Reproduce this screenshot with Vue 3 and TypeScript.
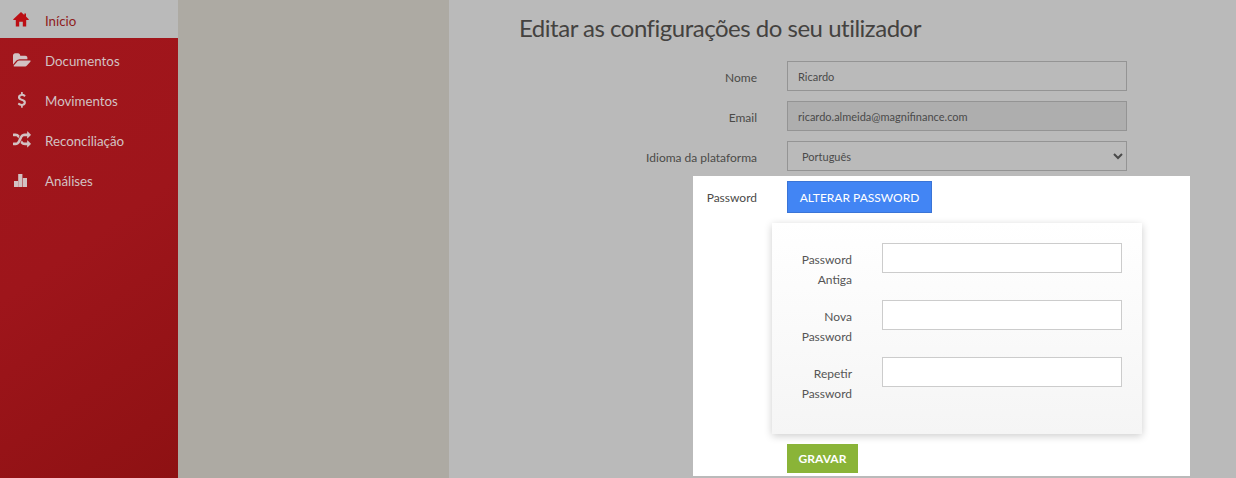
<script setup lang="ts">
const items = [
  { label: 'Início', icon: 'home', active: true },
  { label: 'Documentos', icon: 'folder' },
  { label: 'Movimentos', icon: 'dollar' },
  { label: 'Reconciliação', icon: 'random' },
  { label: 'Análises', icon: 'bars' },
]
const pwFields = [
  ['Password', 'Antiga'],
  ['Nova', 'Password'],
  ['Repetir', 'Password'],
]
</script>

<template>
  <div class="page">
    <nav class="sidebar">
      <a v-for="it in items" :key="it.label" class="nav-item" :class="{ active: it.active }">
        <span class="nav-icon">
          <svg v-if="it.icon === 'home'" class="home" width="16" height="15" viewBox="0 0 16 15" fill="currentColor"><path fill-rule="evenodd" d="M8 0 L11.3 3 V1.4 H13 V4.6 L16 7.4 L15.3 8 H13.2 V14.5 H9.8 V9.8 H6.2 V14.5 H2.8 V8 H0.7 L0 7.4 Z"/></svg>
          <svg v-else-if="it.icon === 'folder'" width="18" height="17" viewBox="0 0 1920 1792" fill="currentColor"><path d="M1879 952q0 31-31 66l-336 396q-43 51-120.5 86.5t-143.5 35.5h-1088q-34 0-60.5-13t-26.5-43q0-31 31-66l336-396q43-51 120.5-86.5t143.5-35.5h1088q34 0 60.5 13t26.5 43zm-343-344v160h-832q-94 0-197 47.5t-164 119.5l-337 396-5 6q0-4-.5-12.5t-.5-12.5v-960q0-92 66-158t158-66h320q92 0 158 66t66 158v32h544q92 0 158 66t66 158z"/></svg>
          <svg v-else-if="it.icon === 'dollar'" class="dollar" width="10" height="16" viewBox="0 0 1152 1792" fill="currentColor"><path d="M1138 1171q0 153-99.5 263.5t-258.5 136.5v175q0 14-9 23t-23 9h-135q-13 0-22.5-9.5t-9.5-22.5v-175q-66-9-127.5-31t-101.5-44.5-74-48-46.5-37.5-17.5-18q-17-21-2-41l103-135q7-10 23-12 15-2 24 9l2 2q113 99 243 125 37 8 74 8 81 0 142.5-43t61.5-122q0-28-15-53t-33.5-42-58.5-37.5-66-32-80-32.5q-39-16-61.5-25t-61.5-26.5-62.5-31-56.5-35.5-53.5-42.5-43.5-49-35.5-58-21-66.5-8.5-78q0-138 98-242t255-134v-180q0-13 9.5-22.5t22.5-9.5h135q14 0 23 9t9 23v176q57 6 110.5 23t87 33.5 63.5 37.5 39 29 15 14q17 18 5 38l-81 146q-8 15-23 16-14 3-27-7-3-3-14.5-12t-39-26.5-58.5-32-74.5-26-85.5-11.5q-95 0-155 43t-60 111q0 26 8.5 48t29.5 41.5 39.5 33 56 31 60.5 27 70 27.5q53 20 81 31.5t76 35 75.5 42.5 62 50 53 63.5 31.5 76.5 13 94z"/></svg>
          <svg v-else-if="it.icon === 'random'" width="18" height="18" viewBox="0 0 1792 1792" fill="currentColor"><path d="M666 481q-60 92-137 273-22-45-37-72.5t-40.5-63.5-51-56.5-63-35-81.5-14.5h-224q-14 0-23-9t-9-23v-192q0-14 9-23t23-9h224q250 0 410 225zm1126 799q0 14-9 23l-320 320q-9 9-23 9-13 0-22.5-9.5t-9.5-22.5v-192q-32 0-85 .5t-81 1-73-1-71-5-64-10.5-63-18.5-58-28.5-59-40-55-53.5-56-69.5q59-93 136-273 22 45 37 72.5t40.5 63.5 51 56.5 63 35 81.5 14.5h256v-192q0-14 9-23t23-9q12 0 24 10l319 319q9 9 9 23zm0-896q0 14-9 23l-320 320q-9 9-23 9-13 0-22.5-9.5t-9.5-22.5v-192h-256q-48 0-87 15t-69 45-51 61.5-45 77.5q-32 62-78 171-29 66-49.5 111t-54 105-64 100-74 83-90 68.5-106.5 42-128 16.5h-224q-14 0-23-9t-9-23v-192q0-14 9-23t23-9h224q48 0 87-15t69-45 51-61.5 45-77.5q32-62 78-171 29-66 49.5-111t54-105 64-100 74-83 90-68.5 106.5-42 128-16.5h256v-192q0-14 9-23t23-9q12 0 24 10l319 319q9 9 9 23z"/></svg>
          <svg v-else class="bars" width="13" height="13" viewBox="0 0 13 13" fill="currentColor"><rect x="0" y="7" width="4" height="6"/><rect x="4.2" y="0" width="4.2" height="13"/><rect x="8.8" y="4" width="4.2" height="9"/></svg>
        </span>
        <span class="nav-text">{{ it.label }}</span>
      </a>
    </nav>
    <aside class="middle"></aside>
    <main class="main">
      <h1 class="title">Editar as configurações do seu utilizador</h1>
      <div class="rows">
        <div class="row">
          <label class="lbl">Nome</label>
          <input class="field" type="text" value="Ricardo" />
        </div>
        <div class="row">
          <label class="lbl">Email</label>
          <input class="field locked" type="text" value="ricardo.almeida@magnifinance.com" disabled />
        </div>
        <div class="row">
          <label class="lbl">Idioma da plataforma</label>
          <select class="field pick">
            <option>Português</option>
          </select>
        </div>
      </div>
      <section class="spot">
        <div class="spot-row">
          <label class="lbl spot-lbl">Password</label>
          <button class="btn blue" type="button">ALTERAR PASSWORD</button>
        </div>
        <div class="card">
          <div v-for="f in pwFields" :key="f.join()" class="pw-row">
            <label class="pw-lbl">{{ f[0] }}<br />{{ f[1] }}</label>
            <input class="pw-input" type="password" />
          </div>
        </div>
        <button class="btn green" type="button">GRAVAR</button>
      </section>
    </main>
  </div>
</template>

<style>
html, body { margin: 0; overflow: hidden; }
</style>

<style scoped>
.page {
  display: flex;
  height: 478px;
  overflow: hidden;
  font-family: Lato, "Open Sans", sans-serif;
  font-size: 12px;
  color: #4a4a4a;
}
.sidebar {
  width: 178px;
  flex: none;
  background: linear-gradient(145deg, #a3161c 0%, #9e151b 50%, #8e1113 100%);
  display: flex;
  flex-direction: column;
}
.nav-item {
  display: flex;
  align-items: center;
  height: 40px;
  font-size: 13.3px;
  color: #d2c2c3;
}
.nav-text { padding-top: 1px; }
.nav-item.active {
  height: 38px;
  margin-bottom: 2px;
  padding-top: 2px;
  background: #bababa;
  color: #8f1d1d;
  box-sizing: border-box;
}
.nav-item.active .nav-icon { color: #bb0f14; }
.nav-icon {
  width: 45px;
  flex: none;
  display: flex;
  align-items: center;
  padding-left: 13px;
  box-sizing: border-box;
}
.home { margin-top: -1px; }
.dollar { margin-left: 3px; }
.bars { margin-left: 1px; }
.middle {
  width: 271px;
  flex: none;
  background: #adaaa3;
}
.main {
  flex: 1;
  background: #bababa;
  display: flex;
  flex-direction: column;
}
.title {
  margin: 13px 0 0 70px;
  font-size: 24px;
  font-weight: 400;
  letter-spacing: -0.49px;
  line-height: 30px;
  color: #444240;
}
.rows {
  margin-top: 18px;
  display: flex;
  flex-direction: column;
  gap: 10px;
}
.row {
  display: flex;
  align-items: center;
  height: 30px;
}
.row .lbl { padding-top: 2px; }
.lbl {
  width: 308px;
  margin-right: 30px;
  text-align: right;
  color: #4b4a48;
}
.field {
  width: 340px;
  height: 30px;
  box-sizing: border-box;
  border: 1px solid #949494;
  background: #bababa;
  padding: 0 10px;
  font: 11px Lato, sans-serif;
  color: #4a4a4a;
  border-radius: 0;
  outline: none;
}
.locked { background: #aeaeae; border-color: #949494; }
.pick { padding: 0 10px; }
.spot {
  margin: 5px 0 0 244px;
  width: 497px;
  height: 300px;
  box-sizing: border-box;
  background: #fff;
  padding-top: 5px;
}
.spot-row {
  display: flex;
  align-items: center;
}
.spot-lbl { width: 64px; }
.btn {
  border: none;
  font-family: Lato, sans-serif;
  font-size: 12px;
  color: #fff;
  padding: 0;
  border-radius: 0;
}
.blue {
  width: 145px;
  height: 32px;
  background: #4285f4;
  border: 1px solid #3a74d6;
  box-sizing: border-box;
}
.card {
  margin: 10px 0 0 79px;
  width: 370px;
  height: 211px;
  box-sizing: border-box;
  padding-top: 20px;
  background: linear-gradient(#fff, #f5f5f5);
  box-shadow: 0 2px 8px rgba(0, 0, 0, 0.2);
  display: flex;
  flex-direction: column;
  gap: 17px;
}
.pw-row {
  display: flex;
  align-items: flex-start;
  height: 40px;
}
.pw-lbl {
  width: 80px;
  margin-right: 30px;
  padding-top: 7px;
  text-align: right;
  line-height: 20px;
  color: #555;
}
.pw-input {
  width: 240px;
  height: 30px;
  box-sizing: border-box;
  border: 1px solid #ccc;
  background: #fff;
  border-radius: 0;
  outline: none;
  padding: 0 8px;
}
.green {
  display: block;
  margin: 10px 0 0 94px;
  width: 71px;
  height: 29px;
  background: #8ab438;
  font-weight: 700;
}
</style>
